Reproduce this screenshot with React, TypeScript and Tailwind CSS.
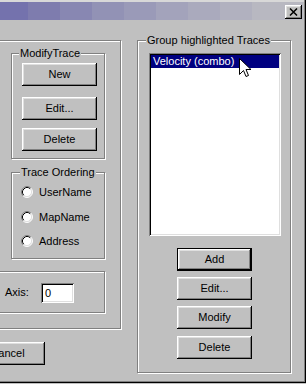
import React from "react";

const raised =
  "shadow-[inset_-1px_-1px_0_#000,inset_1px_1px_0_#fff,inset_-2px_-2px_0_#808080,inset_2px_2px_0_#dfdfdf]";
const etched = "border border-[#808080] shadow-[inset_1px_1px_0_#fff,1px_1px_0_#fff]";
const sunken =
  "shadow-[inset_1px_1px_0_#808080,inset_-1px_-1px_0_#fff,inset_2px_2px_0_#000,inset_-2px_-2px_0_#dfdfdf]";

function Btn({ label, def, className = "" }: { label: string; def?: boolean; className?: string }) {
  return (
    <div
      className={`w-[75px] h-[23px] shrink-0 flex items-center justify-center bg-[#c0c0c0] ${
        def ? "border border-black" : ""
      } ${raised} ${className}`}
    >
      {label}
    </div>
  );
}

function Legend({ text, left }: { text: string; left: string }) {
  return <div className={`absolute top-[-7px] ${left} px-[1px] bg-[#c0c0c0] whitespace-nowrap`}>{text}</div>;
}

function Radio({ label, className = "" }: { label: string; className?: string }) {
  return (
    <div className={`flex items-center h-[12px] ${className}`}>
      <svg width="12" height="12" viewBox="0 0 12 12" className="shrink-0">
        <circle cx="6" cy="6" r="5" fill="#fff" />
        <path d="M2.11 9.89 A5.5 5.5 0 0 1 9.89 2.11" stroke="#808080" strokeWidth="1" fill="none" />
        <path d="M9.89 2.11 A5.5 5.5 0 0 1 2.11 9.89" stroke="#ffffff" strokeWidth="1" fill="none" />
        <path d="M2.82 9.18 A4.5 4.5 0 0 1 9.18 2.82" stroke="#000" strokeWidth="1" fill="none" />
        <path d="M9.18 2.82 A4.5 4.5 0 0 1 2.82 9.18" stroke="#dfdfdf" strokeWidth="1" fill="none" />
      </svg>
      <span className="ml-[6px] whitespace-nowrap">{label}</span>
    </div>
  );
}

const bands = [
  { w: 28, c: "#7472ad" },
  { w: 32, c: "#7e7cae" },
  { w: 32, c: "#8887b2" },
  { w: 32, c: "#9292b5" },
  { w: 32, c: "#9a9ab8" },
  { w: 32, c: "#a3a3bb" },
  { w: 32, c: "#aaaabd" },
  { w: 32, c: "#b1b1bf" },
  { w: 60, c: "#b8b8c1" },
];

export default function App() {
  return (
    <div className="w-[306px] h-[384px] overflow-hidden bg-[#c0c0c0] text-black font-['Liberation_Sans',Arial,sans-serif] text-[11px] leading-[13px]">
      <div className="w-[306px] h-[383px] border-r border-b border-black">
        <div className="h-full border-r border-b border-[#808080] flex flex-col">
          {/* top frame */}
          <div className="h-[2px] bg-[#d8d8d8] shrink-0" />
          {/* title bar */}
          <div className="relative h-[18px] mr-[1px] flex overflow-hidden shrink-0">
            {bands.map((b, i) => (
              <div key={i} className="h-full shrink-0" style={{ width: b.w, background: b.c }} />
            ))}
            <div
              className={`absolute right-[1px] top-[3px] w-[17px] h-[14px] bg-[#c0c0c0] flex items-center justify-center ${raised}`}
            >
              <svg width="9" height="8" viewBox="0 0 9 8">
                <path d="M1 0.5 L8 7.5 M8 0.5 L1 7.5" stroke="#000" strokeWidth="1.5" />
              </svg>
            </div>
          </div>

          {/* body */}
          <div className="flex pt-[20px]">
            {/* left column */}
            <div className="ml-[-20px] w-[141px] shrink-0 flex flex-col">
              <div className={`relative h-[289px] ${etched} flex flex-col items-end pr-[15px]`}>
                {/* ModifyTrace */}
                <div className={`relative mt-[12px] w-[94px] h-[106px] ${etched} flex flex-col pl-[10px]`}>
                  <Legend text="ModifyTrace" left="left-[7px]" />
                  <Btn label="New" className="mt-[9px]" />
                  <Btn label="Edit..." className="mt-[11px]" />
                  <Btn label="Delete" className="mt-[8px]" />
                </div>
                {/* Trace Ordering */}
                <div className={`relative mt-[13px] w-[94px] h-[87px] ${etched} flex flex-col pl-[9px]`}>
                  <Legend text="Trace Ordering" left="left-[8px]" />
                  <Radio label="UserName" className="mt-[13px]" />
                  <Radio label="MapName" className="mt-[13px]" />
                  <Radio label="Address" className="mt-[12px]" />
                </div>
                {/* Axis */}
                <div className={`relative mt-[12px] w-[117px] h-[42px] ${etched} flex items-start pt-[11px]`}>
                  <span className="ml-[16px] w-[36px] mt-[3px]">Axis:</span>
                  <div className={`w-[33px] h-[20px] bg-white flex items-center pl-[4px] ${sunken}`}>0</div>
                </div>
              </div>
              <Btn label="Cancel" className="ml-[-10px] mt-[13px]" />
            </div>

            {/* right group */}
            <div className={`relative ml-[16px] w-[154px] h-[333px] shrink-0 ${etched} flex flex-col`}>
              <Legend text="Group highlighted Traces" left="left-[8px]" />
              <div className={`relative ml-[11px] mt-[12px] w-[132px] h-[183px] bg-white p-[2px] ${sunken}`}>
                <div className="h-[13px] bg-[#000080] text-white pl-[2px] whitespace-nowrap">Velocity (combo)</div>
                <svg
                  className="absolute left-[90px] top-[5px]"
                  width="13"
                  height="20"
                  viewBox="0 0 13 20"
                >
                  <path
                    d="M0.5 0.5 L0.5 16.5 L4.5 12.5 L7 18.5 L9.5 17.5 L7 11.5 L12 11.5 Z"
                    fill="#fff"
                    stroke="#000"
                    strokeWidth="1"
                    strokeLinejoin="miter"
                  />
                </svg>
              </div>
              <div className="ml-[39px] flex flex-col">
                <Btn label="Add" def className="mt-[12px]" />
                <Btn label="Edit..." className="mt-[6px]" />
                <Btn label="Modify" className="mt-[6px]" />
                <Btn label="Delete" className="mt-[7px]" />
              </div>
            </div>
          </div>
        </div>
      </div>
    </div>
  );
}
